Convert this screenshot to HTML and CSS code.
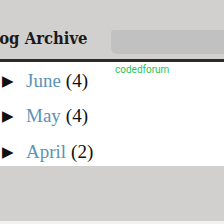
FILE: index.html
```html
<!DOCTYPE html>
<html>
<head>
    <meta charset="utf-8">
    <title>Blog Archive</title>
    <link rel="stylesheet" href="styles.css">
</head>
<body>
    <div class="widget">
        <div class="widget-head">
            <h2 class="title">Blog Archive</h2>
            <div class="smudge"></div>
        </div>

        <div class="widget-body">
            <span class="watermark">codedforum</span>
            <ul class="archive">
                <li><span class="toggle">&#9654;</span><a href="#">June</a> <span class="count">(4)</span></li>
                <li><span class="toggle">&#9654;</span><a href="#">May</a> <span class="count">(4)</span></li>
                <li><span class="toggle">&#9654;</span><a href="#">April</a> <span class="count">(2)</span></li>
            </ul>
        </div>
    </div>
    <div class="page-end"></div>
</body>
</html>
```

FILE: styles.css
```css
* {
    margin: 0;
    padding: 0;
    box-sizing: border-box;
}

body {
    background: #d1d0ce;
    width: 224px;
    height: 224px;
    overflow: hidden;
    display: flex;
    flex-direction: column;
}

.widget-head {
    height: 62px;
    display: flex;
    align-items: flex-start;
    border-bottom: 3px solid #2b2b2b;
}

.title {
    font-family: "DejaVu Serif", serif;
    font-stretch: condensed;
    font-weight: bold;
    font-size: 16.5px;
    color: #1a1a1a;
    white-space: nowrap;
    margin-left: -19px;
    margin-top: 29px;
    width: 130px;
    flex-shrink: 0;
}

.smudge {
    flex: 1;
    height: 24px;
    margin-top: 30px;
    background: #c1c1c1;
    border-radius: 3px 0 0 6px;
}

.widget-body {
    position: relative;
    background: #fff;
    height: 104px;
}

.watermark {
    position: absolute;
    left: 115px;
    top: 2px;
    font-family: Roboto, sans-serif;
    font-size: 10px;
    color: #1fc45a;
}

.archive {
    list-style: none;
    padding-top: 1px;
}

.archive li {
    height: 35.5px;
    display: flex;
    align-items: center;
    font-family: "Liberation Serif", serif;
    font-size: 19px;
    color: #111;
}

.toggle {
    font-family: "DejaVu Sans", sans-serif;
    font-size: 15px;
    width: 26px;
    padding-left: 2px;
}

.archive a {
    color: #5a93b8;
    text-decoration: none;
    margin-right: 5px;
}

.page-end {
    margin-top: auto;
    height: 3px;
    background: #f2f2f2;
}
```
